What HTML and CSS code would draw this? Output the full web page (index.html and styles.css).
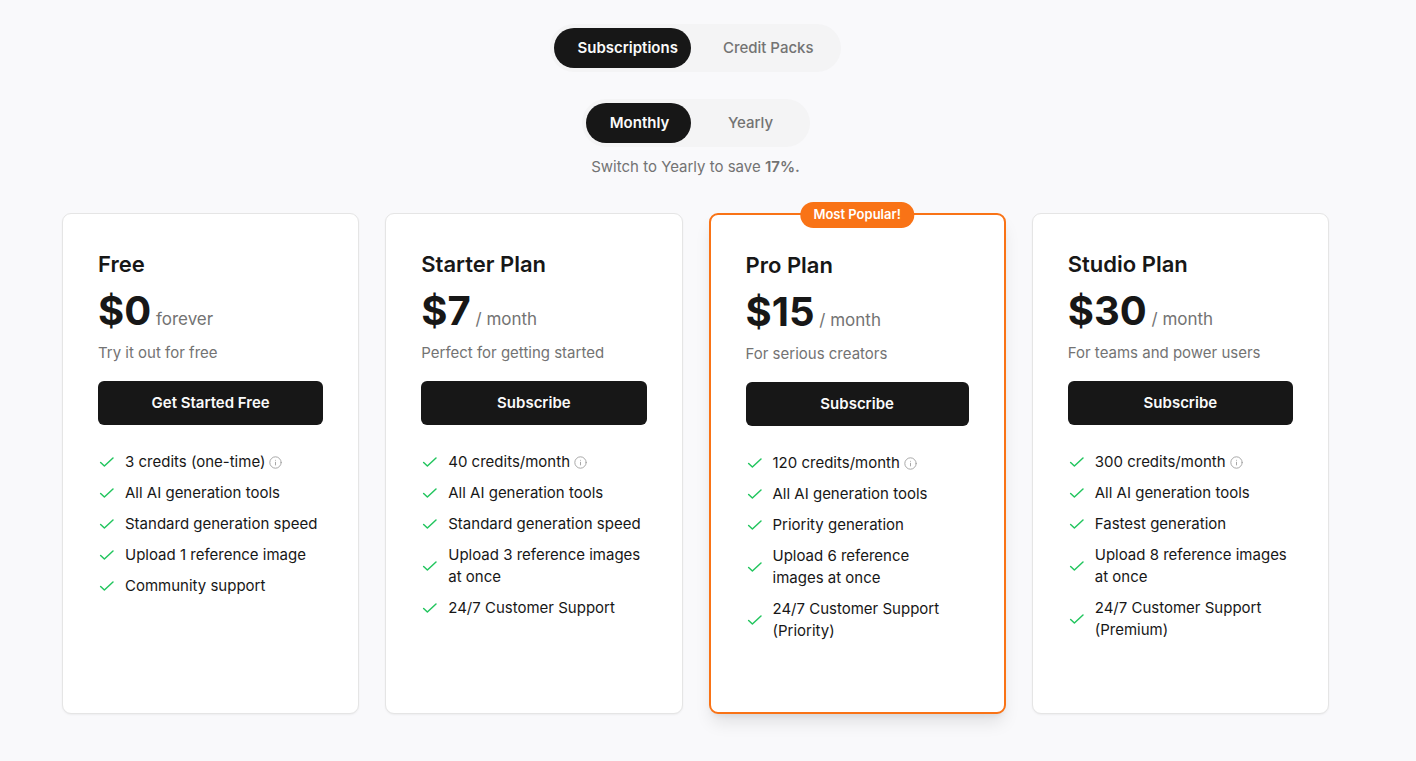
FILE: index.html
```
<!DOCTYPE html>
<html lang="en">

<head>
    <meta charset="UTF-8">
    <meta name="viewport" content="width=device-width, initial-scale=1.0">
    <title>Pricing</title>
    <link rel="stylesheet" href="styles.css">
</head>

<body>
    <svg class="sprite" aria-hidden="true">
        <symbol id="check" viewBox="0 0 24 24">
            <path d="M20 6.75 8.5 17.25l-5-4.5" />
        </symbol>
        <symbol id="info" viewBox="0 0 24 24">
            <circle cx="12" cy="12" r="10.5" />
            <path d="M12 16.5v-5M12 8h.01" />
        </symbol>
    </svg>

    <main class="pricing">
        <div class="switch type">
            <button type="button" class="active" aria-pressed="true">Subscriptions</button>
            <button type="button" aria-pressed="false">Credit Packs</button>
        </div>

        <div class="switch period">
            <button type="button" class="active" aria-pressed="true">Monthly</button>
            <button type="button" aria-pressed="false">Yearly</button>
        </div>
        <p class="save">Switch to Yearly to save <strong>17%.</strong></p>

        <div class="plans">
            <section class="card">
                <h2>Free</h2>
                <p class="price"><strong>$0</strong> forever</p>
                <p class="description">Try it out for free</p>
                <button type="button" class="subscribe">Get Started Free</button>
                <ul>
                    <li><svg class="check"><use href="#check" /></svg><span>3 credits (one-time)</span><svg class="info"><use href="#info" /></svg></li>
                    <li><svg class="check"><use href="#check" /></svg><span>All AI generation tools</span></li>
                    <li><svg class="check"><use href="#check" /></svg><span>Standard generation speed</span></li>
                    <li><svg class="check"><use href="#check" /></svg><span>Upload 1 reference image</span></li>
                    <li><svg class="check"><use href="#check" /></svg><span>Community support</span></li>
                </ul>
            </section>

            <section class="card">
                <h2>Starter Plan</h2>
                <p class="price"><strong>$7</strong> / month</p>
                <p class="description">Perfect for getting started</p>
                <button type="button" class="subscribe">Subscribe</button>
                <ul>
                    <li><svg class="check"><use href="#check" /></svg><span>40 credits/month</span><svg class="info"><use href="#info" /></svg></li>
                    <li><svg class="check"><use href="#check" /></svg><span>All AI generation tools</span></li>
                    <li><svg class="check"><use href="#check" /></svg><span>Standard generation speed</span></li>
                    <li><svg class="check"><use href="#check" /></svg><span>Upload 3 reference images at once</span></li>
                    <li><svg class="check"><use href="#check" /></svg><span>24/7 Customer Support</span></li>
                </ul>
            </section>

            <section class="card popular">
                <span class="badge">Most Popular!</span>
                <h2>Pro Plan</h2>
                <p class="price"><strong>$15</strong> / month</p>
                <p class="description">For serious creators</p>
                <button type="button" class="subscribe">Subscribe</button>
                <ul>
                    <li><svg class="check"><use href="#check" /></svg><span>120 credits/month</span><svg class="info"><use href="#info" /></svg></li>
                    <li><svg class="check"><use href="#check" /></svg><span>All AI generation tools</span></li>
                    <li><svg class="check"><use href="#check" /></svg><span>Priority generation</span></li>
                    <li><svg class="check"><use href="#check" /></svg><span>Upload 6 reference images at once</span></li>
                    <li><svg class="check"><use href="#check" /></svg><span>24/7 Customer Support (Priority)</span></li>
                </ul>
            </section>

            <section class="card">
                <h2>Studio Plan</h2>
                <p class="price"><strong>$30</strong> / month</p>
                <p class="description">For teams and power users</p>
                <button type="button" class="subscribe">Subscribe</button>
                <ul>
                    <li><svg class="check"><use href="#check" /></svg><span>300 credits/month</span><svg class="info"><use href="#info" /></svg></li>
                    <li><svg class="check"><use href="#check" /></svg><span>All AI generation tools</span></li>
                    <li><svg class="check"><use href="#check" /></svg><span>Fastest generation</span></li>
                    <li><svg class="check"><use href="#check" /></svg><span>Upload 8 reference images at once</span></li>
                    <li><svg class="check"><use href="#check" /></svg><span>24/7 Customer Support (Premium)</span></li>
                </ul>
            </section>
        </div>
    </main>
</body>

</html>
```

FILE: styles.css
```
* {
    box-sizing: border-box;
}

body {
    margin: 0;
    background-color: #f9f9fb;
    color: #171717;
    font-family: Inter, sans-serif;
    font-size: 15px;
    line-height: 22px;
}

h2,
p,
ul {
    margin: 0;
    padding: 0;
}

button {
    border: none;
    font: inherit;
    cursor: pointer;
}

.sprite {
    display: none;
}

.pricing {
    padding: 24px 87px 47px 62px;
    display: flex;
    flex-direction: column;
    align-items: center;
}

.switch {
    display: flex;
    padding: 4px;
    border-radius: 24px;
    background-color: #f4f4f5;
}

.switch button {
    height: 40px;
    padding: 0 23px;
    border-radius: 20px;
    background: none;
    color: #737373;
    font-weight: 500;
}

.switch .active {
    background-color: #171717;
    color: #fafafa;
    font-weight: 600;
}

.type .active {
    padding-right: 13px;
    margin-right: 9px;
}

.period {
    margin-top: 27px;
}

.period button {
    width: 110px;
}

.period .active {
    width: 105px;
    padding: 0 20px 0 23px;
    margin-right: 5px;
}

.save {
    margin-top: 9px;
    color: #737373;
}

.save strong {
    font-weight: 600;
}

.plans {
    width: 100%;
    margin-top: 35px;
    display: grid;
    grid-template-columns: repeat(4, 1fr);
    gap: 26px;
}

.card {
    position: relative;
    min-height: 501px;
    padding: 35px;
    border: 1px solid #e5e5e5;
    border-radius: 9px;
    background-color: #fff;
    box-shadow: 0 1px 2px rgba(0, 0, 0, 0.05);
}

.popular {
    border: 2px solid #f97316;
    box-shadow: 0 11px 17px -3px rgba(0, 0, 0, 0.1), 0 4px 7px -4px rgba(0, 0, 0, 0.1);
}

.popular ul {
    padding-right: 8px;
}

.badge {
    position: absolute;
    top: -13px;
    left: 50%;
    transform: translateX(-50%);
    padding: 1px 13px 3px;
    border-radius: 13px;
    background-color: #f97316;
    color: #fff;
    font-size: 13px;
    font-weight: 600;
    white-space: nowrap;
}

h2 {
    font-size: 22px;
    font-weight: 600;
    line-height: 31px;
}

.price {
    margin-top: 9px;
    color: #737373;
    font-size: 17px;
    line-height: 44px;
}

.price strong {
    color: #171717;
    font-size: 40px;
    font-weight: 700;
}

.description {
    margin-top: 1px;
    color: #737373;
}

.subscribe {
    width: 100%;
    height: 44px;
    margin-top: 17px;
    border-radius: 6px;
    background-color: #171717;
    color: #fafafa;
    font-weight: 600;
}

ul {
    margin-top: 26px;
    display: flex;
    flex-direction: column;
    gap: 9px;
    list-style-type: none;
}

li {
    display: flex;
    align-items: center;
}

.check,
.info {
    flex: none;
    fill: none;
    stroke-linecap: round;
    stroke-linejoin: round;
}

.check {
    width: 18px;
    height: 18px;
    margin-right: 9px;
    stroke: #22c55e;
    stroke-width: 2;
}

.info {
    width: 13px;
    height: 13px;
    margin-left: 4px;
    stroke: #a3a3a3;
    stroke-width: 1.75;
}
```
